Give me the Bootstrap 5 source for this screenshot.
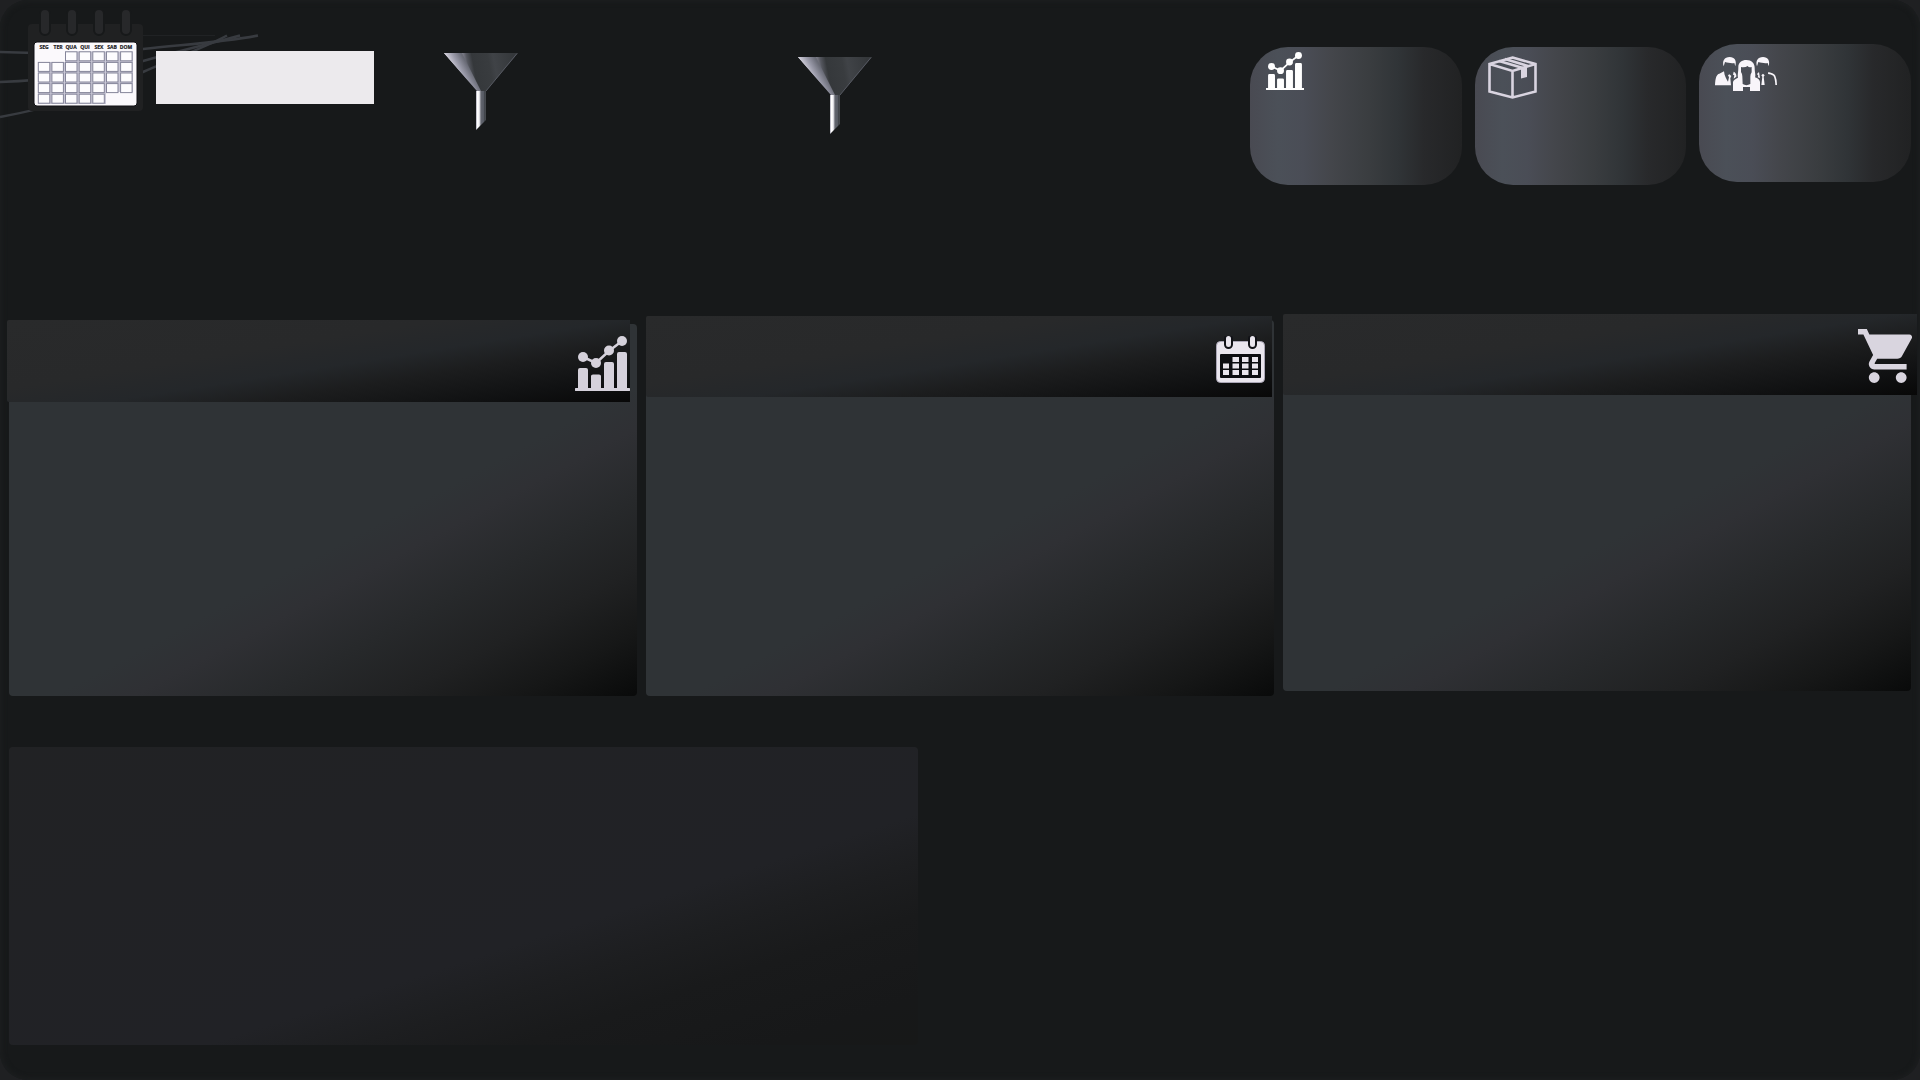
<!DOCTYPE html>
<html lang="pt-BR">
<head>
<meta charset="utf-8">
<meta name="viewport" content="width=device-width, initial-scale=1">
<title>Dashboard</title>
<link href="https://cdn.jsdelivr.net/npm/bootstrap@5.3.0/dist/css/bootstrap.min.css" rel="stylesheet">
<style>
body { background: #1f2022; font-family: "Open Sans", "Noto Sans", sans-serif; }
svg { display: block; }
.frame { min-height: 100vh; background: #17191a; border-radius: 28px; box-shadow: inset 0 0 5px 2px #1c1e1f; overflow: hidden; }
.topbar { height: 314px; padding-right: 9px; }
.waves { position: absolute; left: 0; top: 30px; }
.month-icon { margin: 10px 13px 0 28px; position: relative; }
.date-box { width: 218px; height: 53px; margin-top: 51px; background: #eceaed; border: 0; border-radius: 0; position: relative; }
.filters { padding: 53px 97px 0 70px; }
.filter-btn { background: none; border: 0; padding: 0; }
.filter-low { margin-top: 4px; }
.kpis { width: 34.6%; gap: 13px; padding-top: 44px; }
.kpi { flex: none; width: calc((100% - 26px) / 3); height: 138px; border-radius: 38px; background: linear-gradient(90deg, #494a52 0%, #4b5058 13%, #4a4d56 25%, #44464b 38%, #3a3d40 56%, #303437 70%, #28292b 82%, #212223 100%); padding: 5px 16px; }
.kpi-low { margin-top: 3px; }
.kpi-box { padding: 9px 13px; }
.kpi-people { padding: 13px 16px; }
.panels { padding: 0 9px; gap: 9px; }
.panel { margin-top: 6px; min-height: 372px; border-radius: 4px; background: linear-gradient(152deg, #2f3336 0%, #2f3336 56%, #2f3034 62%, #27292b 72%, #202122 82%, #161717 91%, #090a0a 100%); flex: 1 1 0; }
.panel-sales { margin-top: 10px; }
.panel-cart { margin: 4px 0 5px; }
.panel-head { height: 81px; margin: -4px 2px 0 0; border-radius: 2px 0 0 2px; background: linear-gradient(171deg, #292a2b 0%, #28292a 38%, #24272a 54%, #1c1d1e 67%, #101112 86%, #080808 100%); }
.panel-sales .panel-head { height: 82px; margin: -4px 7px 0 -2px; }
.panel-cart .panel-head { margin: -4px -6px 0 0; padding: 2px 5px 0 0; }
.panel-days .panel-head { padding: 5px 7px 0 0; }
.detail { width: 47.35%; height: 298px; margin: 51px 0 0 9px; border-radius: 4px; background: linear-gradient(162deg, #212224 0%, #212226 61%, #1d1e20 69%, #191a1b 78%, #171819 92%, #171818 100%); }
.days { font: 700 5px "Open Sans", "Noto Sans", sans-serif; fill: #1c1b24; stroke: #1c1b24; stroke-width: .2px; text-anchor: middle; }
</style>
</head>
<body>
<main class="frame position-relative">
  <svg class="waves" width="270" height="92" viewBox="0 30 270 92" fill="none" stroke="#383b40" stroke-width="2.500" aria-hidden="true">
    <path d="M0 52C50 54 90 54 143 49C190 44 225 42 258 35.500"/>
    <path d="M0 82C60 80 110 70 143 61C175 52 205 45 240 35.500"/>
    <path d="M0 117C60 106 110 88 143 72C165 62 200 50 227 35.500"/>
    <path d="M143 35.500H215" stroke="#202224" stroke-width="1"/>
  </svg>

  <header class="topbar d-flex align-items-start">
    <svg class="month-icon flex-shrink-0" width="115" height="101" viewBox="28 10 115 101" role="img" aria-label="Calendário">
      <rect x="28" y="24" width="115" height="87" rx="4" fill="#202122"/>
      <g fill="#27282a" stroke="#17191a" stroke-width="2">
        <rect x="40" y="9" width="10" height="26" rx="5"/><rect x="67" y="9" width="10" height="26" rx="5"/><rect x="94" y="9" width="10" height="26" rx="5"/><rect x="121" y="9" width="10" height="26" rx="5"/>
      </g>
      <rect x="34" y="42" width="103" height="64" rx="3" fill="#fbf9fc" stroke="#101114"/>
      <g class="days"><text x="44" y="49">SEG</text><text x="58" y="49">TER</text><text x="71" y="49">QUA</text><text x="85" y="49">QUI</text><text x="99" y="49">SEX</text><text x="112" y="49">SAB</text><text x="126" y="49">DOM</text></g>
      <defs><rect id="day" width="11.500" height="9" fill="#fdfcfe" stroke="#85859a"/></defs>
      <path d="M65 51.500H133V92H106V104H38V62H65Z" fill="#c9c7d6"/>
      <g><use href="#day" x="65.500" y="51.800"/><use href="#day" x="79.200" y="51.800"/><use href="#day" x="92.800" y="51.800"/><use href="#day" x="106.500" y="51.800"/><use href="#day" x="120.600" y="51.800"/></g>
      <g id="week"><use href="#day" x="38.300" y="62.400"/><use href="#day" x="51.900" y="62.400"/><use href="#day" x="65.500" y="62.400"/><use href="#day" x="79.200" y="62.400"/><use href="#day" x="92.800" y="62.400"/><use href="#day" x="106.500" y="62.400"/><use href="#day" x="120.600" y="62.400"/></g>
      <use href="#week" y="10.600"/><use href="#week" y="21.200"/>
      <g><use href="#day" x="38.300" y="94.200"/><use href="#day" x="51.900" y="94.200"/><use href="#day" x="65.500" y="94.200"/><use href="#day" x="79.200" y="94.200"/><use href="#day" x="92.800" y="94.200"/></g>
    </svg>
    <input class="date-box flex-shrink-0" type="text" aria-label="Período">

    <div class="filters d-flex flex-grow-1">
      <div class="w-50">
        <button class="filter-btn" type="button" aria-label="Filtro 1">
          <svg width="74" height="78" viewBox="0 0 74 78">
            <defs>
              <linearGradient id="cone" gradientUnits="userSpaceOnUse" x1="6" y1="14" x2="70" y2="2"><stop offset="0" stop-color="#e8e6ee"/><stop offset=".17" stop-color="#aaa8b8"/><stop offset=".28" stop-color="#55575f"/><stop offset=".36" stop-color="#35383b"/><stop offset=".6" stop-color="#393c3f"/><stop offset=".68" stop-color="#404347"/><stop offset="1" stop-color="#34373a"/></linearGradient>
              <linearGradient id="coneShade" gradientUnits="userSpaceOnUse" x1="12" y1="22" x2="33" y2="10"><stop offset="0" stop-color="#d8d5e0"/><stop offset=".3" stop-color="#9c9cab"/><stop offset=".6" stop-color="#6b6d78"/><stop offset="1" stop-color="#35383b" stop-opacity="0"/></linearGradient>
              <linearGradient id="stem"><stop offset="0" stop-color="#aaa8b8"/><stop offset=".15" stop-color="#ffffff"/><stop offset=".32" stop-color="#f0eff4"/><stop offset=".5" stop-color="#62656e"/><stop offset=".8" stop-color="#555962"/><stop offset=".9" stop-color="#303336"/><stop offset="1" stop-color="#5c5f66"/></linearGradient>
            </defs>
            <g id="funnel"><path d="M0 0H74L42 38H33Z" fill="url(#cone)"/><path d="M0 0H18L37 38H33Z" fill="url(#coneShade)"/><path d="M73 .500L42 38" stroke="#565962"/><path d="M32 38H42V67L32 77Z" fill="url(#stem)"/></g>
          </svg>
        </button>
      </div>
      <div class="w-50 filter-low">
        <button class="filter-btn" type="button" aria-label="Filtro 2"><svg width="74" height="78" viewBox="0 0 74 78"><use href="#funnel"/></svg></button>
      </div>
    </div>

    <div class="kpis d-flex flex-shrink-0">
      <section class="kpi kpi-low" aria-label="Vendas">
        <svg width="38" height="38" viewBox="0 0 55 55" fill="#fff" stroke="#fff"><g id="chart"><path stroke="none" d="M1 52H54A1.500 1.500 0 0 1 54 55H1A1.500 1.500 0 0 1 1 52ZM3 34Q3 32 5 32H11Q13 32 13 34V53H3ZM16 40Q16 38.500 18 38.500H24Q26 38.500 26 40V53H16ZM29 28Q29 26 31 26H37Q39 26 39 28V53H29ZM42 18Q42 16 44 16H50Q52 16 52 18V53H42Z"/><path d="M8 21L21 27L34 15L47 5" fill="none" stroke-width="2.500"/><g stroke="none"><circle cx="8" cy="21" r="5"/><circle cx="21" cy="27" r="5"/><circle cx="34" cy="14.500" r="5"/><circle cx="47" cy="5" r="5"/></g></g></svg>
      </section>
      <section class="kpi kpi-low kpi-box" aria-label="Produtos">
        <svg width="49" height="43" viewBox="0 0 49 43" fill="none" stroke="#d9d4e0" stroke-width="2.600"><path d="M24.500 1.500L47.500 8V35.500L24.500 41.500L1.500 35.500V8ZM1.500 8L24.500 15L47.500 8M24.500 15V41.500"/><path d="M11 5L35 12M17 3L40 10"/><path d="M33 12L39 9.500V21L33 22.500Z" fill="#d9d4e0" stroke="none"/></svg>
      </section>
      <section class="kpi kpi-people" aria-label="Clientes">
        <svg width="62" height="34" viewBox="30 27 186 102" fill="#f8f5fa">
          <path id="hair" d="M56 55C51 39 58 27 74 27C89 27 96 38 91 55L88 45C79 47 69 44 60 42Z"/>
          <path d="M30 112C31 88 35 79 43 77L57 70C58 84 65 94 69 101L72 88L69 82L73 79L79 84L76 91L78 112Z"/>
          <path d="M86 71Q95 75 94 86L86 92L88 82L84 80Z"/>
          <use href="#hair" x="100"/>
          <path d="M162 72L156 78L160 83L158 88L165 90ZM174 77L179 82L176 86L179 111H169L172 86L169 82Z"/>
          <path d="M190 72Q207 76 211 83Q216 94 216 111H211Q210 90 205 83Q198 79 189 78Z"/>
          <path fill-rule="evenodd" d="M99 89C97 80 100 74 100 57C100 43 111 36 124 36C140 36 149 46 149 59C149 74 153 80 150 88Q163 92 165 101V129H135V117H114V129H84V102Q86 94 99 89ZM108 57V72Q112 77 112 85L113 108Q124 115 136 108V86Q136 78 140 73V57Q131 59 128 54Q120 59 108 57Z"/>
        </svg>
      </section>
    </div>
  </header>

  <div class="panels d-flex">
    <section class="panel panel-sales" aria-label="Vendas">
      <div class="panel-head d-flex justify-content-end align-items-start pt-3"><svg width="55" height="55" viewBox="0 0 55 55" fill="#d5d1db" stroke="#d5d1db"><use href="#chart"/></svg></div>
    </section>
    <section class="panel panel-days" aria-label="Dias">
      <div class="panel-head d-flex justify-content-end align-items-center">
        <svg width="49" height="47" viewBox="0 0 49 47"><rect x=".500" y="5.500" width="48" height="41" rx="4" fill="#eae6ee" stroke="#aaa6b6"/><rect x="4" y="18" width="41" height="24" rx="1" fill="#0d0e12"/><g fill="#eae6ee" stroke="#111217" stroke-width="2"><rect x="9" y="-1" width="7" height="13" rx="3.500"/><rect x="33" y="-1" width="7" height="13" rx="3.500"/></g><path fill="#eae6ee" d="M16.500 21h6.500v5h-6.500zM26 21h6.500v5h-6.500zM36 21h6v5h-6zM7 27.500h6v5h-6zM16.500 27.500h6.500v5h-6.500zM26 27.500h6.500v5h-6.500zM36 27.500h6v5h-6zM7 34h6v5h-6zM16.500 34h6.500v5h-6.500zM26 34h6.500v5h-6.500zM36 34h6v5h-6z"/></svg>
      </div>
    </section>
    <section class="panel panel-cart" aria-label="Compras">
      <div class="panel-head d-flex justify-content-end align-items-center">
        <svg width="54" height="54" viewBox="1 2 20 20" fill="#d9d5df"><path d="M7 18c-1.100 0-1.990.900-1.990 2S5.900 22 7 22s2-.900 2-2-.900-2-2-2zM1 2v2h2l3.600 7.590-1.350 2.450c-.160.280-.250.610-.250.960 0 1.100.900 2 2 2h12v-2H7.420c-.140 0-.250-.110-.250-.250l.030-.120.900-1.630h7.450c.750 0 1.410-.410 1.750-1.030l3.580-6.490A1.003 1.003 0 0 0 20 4H5.210l-.940-2H1zm16 16c-1.100 0-1.990.900-1.990 2s.890 2 1.990 2 2-.900 2-2-.900-2-2-2z"/></svg>
      </div>
    </section>
  </div>

  <section class="detail" aria-label="Detalhes"></section>
</main>
<script src="https://cdn.jsdelivr.net/npm/bootstrap@5.3.0/dist/js/bootstrap.bundle.min.js"></script>
</body>
</html>
